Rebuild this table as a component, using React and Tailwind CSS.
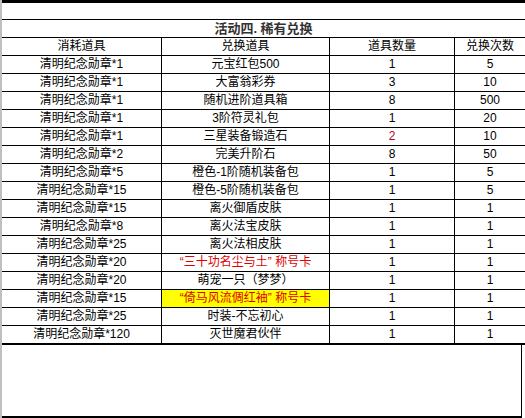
const rows = [
  ['清明纪念勋章*1', '元宝红包500', '1', '5'],
  ['清明纪念勋章*1', '大富翁彩券', '3', '10'],
  ['清明纪念勋章*1', '随机进阶道具箱', '8', '500'],
  ['清明纪念勋章*1', '3阶符灵礼包', '1', '20'],
  ['清明纪念勋章*1', '三星装备锻造石', '2', '10', 'qty'],
  ['清明纪念勋章*2', '完美升阶石', '8', '50'],
  ['清明纪念勋章*5', '橙色-1阶随机装备包', '1', '5'],
  ['清明纪念勋章*15', '橙色-5阶随机装备包', '1', '5'],
  ['清明纪念勋章*15', '离火御盾皮肤', '1', '1'],
  ['清明纪念勋章*8', '离火法宝皮肤', '1', '1'],
  ['清明纪念勋章*25', '离火法相皮肤', '1', '1'],
  ['清明纪念勋章*20', '“三十功名尘与土” 称号卡', '1', '1', 'red'],
  ['清明纪念勋章*20', '萌宠一只（梦梦）', '1', '1'],
  ['清明纪念勋章*15', '“倚马风流倜红袖” 称号卡', '1', '1', 'yellow'],
  ['清明纪念勋章*25', '时装-不忘初心', '1', '1'],
  ['清明纪念勋章*120', '灭世魔君伙伴', '1', '1'],
];

function Row({ cells, flag }) {
  const itemCls =
    flag === 'red'
      ? 'text-[#e00000]'
      : flag === 'yellow'
      ? 'text-[#e00000] bg-[#ffff00]'
      : '';
  return (
    <div className="flex h-[18px] border-t border-black">
      <div className="w-[160px] border-r border-black text-center">{cells[0]}</div>
      <div className={`w-[168px] border-r border-black text-center ${itemCls}`}>{cells[1]}</div>
      <div className={`w-[125px] border-r border-black text-center ${flag === 'qty' ? 'text-[#c0002a]' : ''}`}>
        {cells[2]}
      </div>
      <div className="flex-1 text-center">{cells[3]}</div>
    </div>
  );
}

export default function App() {
  return (
    <div
      className="w-[525px] h-[418px] bg-white border-l-2 border-[#c0c0c0] flex flex-col overflow-hidden text-[12px] leading-[17px] text-black"
      style={{ fontFamily: '"Liberation Sans", "Noto Sans CJK SC", sans-serif' }}
    >
      <div className="h-[3px] bg-black shrink-0" />
      <div className="h-[16px] shrink-0" />
      <div className="h-[18px] border-t border-black text-center font-bold text-[13px] text-[#333]">
        活动四. 稀有兑换
      </div>
      <Row cells={['消耗道具', '兑换道具', '道具数量', '兑换次数']} />
      {rows.map((r, i) => (
        <Row key={i} cells={r} flag={r[4]} />
      ))}
      <div className="h-[2px] bg-black shrink-0" />
      <div className="w-[520px] flex-1 border-r border-b-2 border-black" />
    </div>
  );
}
